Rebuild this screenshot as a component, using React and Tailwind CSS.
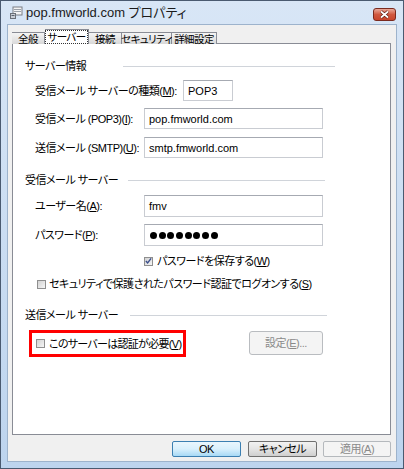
import React from "react";

const F = "font-['Liberation_Sans','Noto_Sans_CJK_JP',sans-serif] [font-feature-settings:'palt'] text-[11px] leading-[14px] text-black whitespace-nowrap";
const T = "tracking-[-0.5px]";

function Box({ w, h = 21, children }) {
  return (
    <div
      className={`${w} ${h === 22 ? "h-[22px]" : "h-[21px]"} bg-white border border-[#c9ccd2] border-t-[#a6aab2] flex items-center pl-[4px]`}
    >
      {children}
    </div>
  );
}

function Check({ checked }) {
  return (
    <div className="w-[9px] h-[9px] border border-[#8f8f8f] bg-gradient-to-br from-[#d2d2d2] to-[#f6f6f6] flex items-center justify-center shrink-0">
      {checked && (
        <svg width="8" height="8" viewBox="0 0 8 8">
          <path d="M1 4 L3 6.2 L7 1" stroke="#3c4f8c" strokeWidth="1.6" fill="none" />
        </svg>
      )}
    </div>
  );
}

function Header({ tw, lw, children }) {
  return (
    <div className="flex items-center h-[14px] pl-[12px]">
      <div className={`${tw} shrink-0 ${T}`}>{children}</div>
      <div className={`${lw} h-px bg-[#d0d4da]`} />
    </div>
  );
}

const tab = "h-[12px] border border-[#898c95] border-b-0 border-l-0 bg-gradient-to-b from-[#f4f4f4] to-[#d9d9d9] flex items-center justify-center leading-[12px]";

export default function App() {
  return (
    <div className={`${F} w-[404px] h-[469px] bg-gradient-to-b from-[#d8e6f6] to-[#bdd4ee] border border-[#4a5a70] flex flex-col`}>
      {/* title bar */}
      <div className="h-[23px] flex items-center relative shrink-0">
        <svg className="ml-[9px]" width="13" height="13" viewBox="0 0 13 13">
          <rect x="3" y="1" width="9" height="8" fill="#f4f4f4" stroke="#7b7f86" />
          <rect x="4" y="3" width="7" height="1" fill="#9aa0a8" />
          <rect x="4" y="5" width="7" height="1" fill="#9aa0a8" />
          <rect x="0.5" y="7.5" width="5" height="5" fill="#c9ced6" stroke="#6b7078" />
          <rect x="1.5" y="9" width="3" height="1" fill="#59606a" />
        </svg>
        <span className="ml-[3px] text-[13px] leading-[15px] text-[#1a1a1a]">pop.fmworld.com プロパティ</span>
        <div className="absolute left-[372px] top-[7px] w-[23px] h-[13px] rounded-[3px] border border-[#7a2a1e] bg-gradient-to-b from-[#e9a99a] via-[#d0583f] to-[#c8452c] flex items-center justify-center">
          <svg width="11" height="9" viewBox="0 0 11 9">
            <path d="M2 1.5 L9 7.5 M9 1.5 L2 7.5" stroke="#5a1a10" strokeWidth="3" />
            <path d="M2 1.5 L9 7.5 M9 1.5 L2 7.5" stroke="#ffffff" strokeWidth="1.7" />
          </svg>
        </div>
      </div>

      {/* body */}
      <div className="ml-[6px] w-[390px] h-[438px] bg-[#f0f0f0] border border-[#9db3cc] flex flex-col">
        {/* tabs */}
        <div className="mt-[4px] ml-[4px] h-[15px] flex items-end relative z-10 -mb-px text-[10.5px] tracking-[-0.6px]">
          <div className={`${tab} w-[33px] border-l`}>全般</div>
          <div className="w-[44px] h-[15px] border border-[#898c95] border-b-0 border-l-0 bg-white flex items-start justify-center pt-[1px]">
            <span className="outline outline-1 outline-dotted outline-[#333] px-[1px] leading-[12px]">サーバー</span>
          </div>
          <div className={`${tab} w-[33px]`}>接続</div>
          <div className={`${tab} w-[50px]`}>セキュリティ</div>
          <div className={`${tab} w-[45px]`}>詳細設定</div>
        </div>

        {/* panel */}
        <div className="ml-[4px] w-[379px] h-[392px] bg-white border border-[#898c95] flex flex-col">
          <div className="mt-[15px]">
            <Header tw="w-[98px]" lw="w-[212px]">サーバー情報</Header>
          </div>
          <div className="mt-[7px] flex items-center pl-[22px]">
            <div className={`w-[148px] shrink-0 ${T}`}>受信メール サーバーの種類(<u>M</u>):</div>
            <Box w="w-[50px]">POP3</Box>
          </div>
          <div className="mt-[7px] flex items-center pl-[22px]">
            <div className={`w-[109px] shrink-0 ${T}`}>受信メール (POP3)(<u>I</u>):</div>
            <Box w="w-[179px]">pop.fmworld.com</Box>
          </div>
          <div className="mt-[8px] flex items-center pl-[22px]">
            <div className={`w-[109px] shrink-0 ${T}`}>送信メール (SMTP)(<u>U</u>):</div>
            <Box w="w-[179px]">smtp.fmworld.com</Box>
          </div>

          <div className="mt-[15px]">
            <Header tw="w-[103px]" lw="w-[197px]">受信メール サーバー</Header>
          </div>
          <div className="mt-[8px] flex items-center pl-[22px]">
            <div className={`w-[109px] shrink-0 ${T}`}>ユーザー名(<u>A</u>):</div>
            <Box w="w-[179px]" h={22}>fmv</Box>
          </div>
          <div className="mt-[7px] flex items-center pl-[22px]">
            <div className={`w-[109px] shrink-0 ${T}`}>パスワード(<u>P</u>):</div>
            <Box w="w-[179px]" h={22}>
              <div className="flex gap-[1.7px] ml-[1px]">
                {[0, 1, 2, 3, 4, 5, 6, 7].map((i) => (
                  <div key={i} className="w-[7px] h-[7px] rounded-full bg-black" />
                ))}
              </div>
            </Box>
          </div>
          <div className="mt-[8px] h-[14px] flex items-center pl-[131px] gap-[4px]">
            <Check checked />
            <span className={T}>パスワードを保存する(<u>W</u>)</span>
          </div>
          <div className="mt-[9px] h-[14px] flex items-center pl-[24px] gap-[3px]">
            <Check />
            <span className={T}>セキュリティで保護されたパスワード認証でログオンする(<u>S</u>)</span>
          </div>

          <div className="mt-[17px]">
            <Header tw="w-[105px]" lw="w-[197px]">送信メール サーバー</Header>
          </div>
          <div className="mt-[8px] flex items-start pl-[16px]">
            <div className="w-[157px] h-[27px] border-[3px] border-[#ff0000] flex items-center pl-[4px] gap-[4px]">
              <Check />
              <span className="tracking-[-0.7px]">このサーバーは認証が必要(<u>V</u>)</span>
            </div>
            <div className={`ml-[63px] mt-[1px] w-[74px] h-[24px] rounded-[3px] border border-[#b9bcc0] bg-[#f4f4f4] text-[#8a8a8a] flex items-center justify-center ${T}`}>
              設定(<u>E</u>)...
            </div>
          </div>
        </div>

        {/* buttons */}
        <div className={`mt-[6px] flex justify-end pr-[5px] ${T}`}>
          <div className="w-[69px] h-[16px] rounded-[2px] border border-[#3c7fb1] bg-gradient-to-b from-[#eaf6fd] via-[#d9f0fc] to-[#a7d9f5] flex items-center justify-center leading-[12px]">OK</div>
          <div className="ml-[7px] w-[69px] h-[16px] rounded-[2px] border border-[#707070] bg-gradient-to-b from-[#f2f2f2] via-[#e4e4e4] to-[#cfcfcf] flex items-center justify-center leading-[12px]">キャンセル</div>
          <div className="ml-[6px] w-[68px] h-[16px] rounded-[2px] border border-[#b5b9bd] bg-[#f4f4f4] text-[#8a8a8a] flex items-center justify-center leading-[12px]">適用(<u>A</u>)</div>
        </div>
      </div>
    </div>
  );
}
